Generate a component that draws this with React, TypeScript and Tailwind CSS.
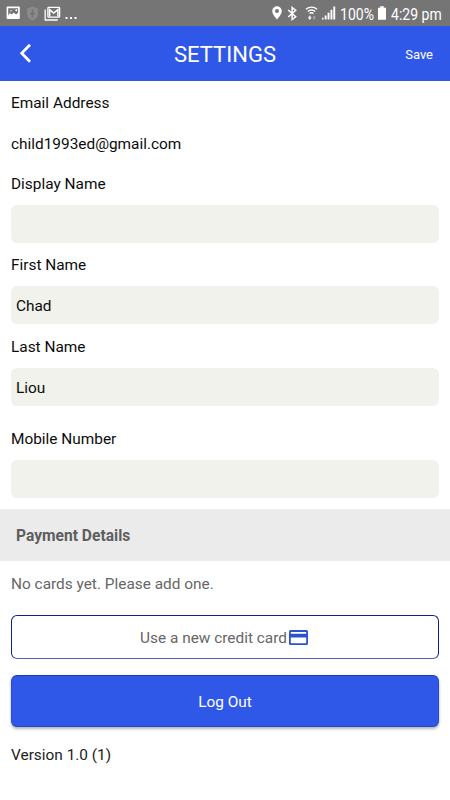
import React from "react";

function StatusBar() {
  return (
    <div className="flex h-[26px] items-center bg-[#757575] text-white">
      <svg className="ml-[6px] h-[14px] w-[14px] shrink-0" viewBox="0 0 14 14" fill="none">
        <path fillRule="evenodd" fill="#fff" d="M1.400.6h11.600a.8.8 0 0 1 .8.8v10.800a.8.8 0 0 1-.8.8H1.400a.8.8 0 0 1-.8-.8V1.400a.8.8 0 0 1 .8-.8ZM2.200 2.200v7.300l1.600-2.600 1.600 1.600 2.300-1.700 2.400 1.600 2-1.600V2.200Z" />
        <circle cx="5" cy="4.700" r=".7" fill="#fff" />
        <circle cx="10.300" cy="4.200" r="1" fill="#fff" />
      </svg>
      <svg className="ml-[6px] h-[15px] w-[13px] shrink-0" viewBox="0 0 13 15">
        <path d="M6.500.5 12 2.500v4.700c0 3.300-2.300 6-5.500 7.300C3.300 13.200 1 10.500 1 7.200V2.500Z" fill="#8a8a8a" />
        <path d="M6.500 3.500v5M6.500 10v1.600M4.500 7l2 2 2-2" stroke="#727272" strokeWidth="1.500" fill="none" />
      </svg>
      <svg className="ml-[5px] h-[15px] w-[17px] shrink-0" viewBox="0 0 17 15" fill="none" stroke="#fff">
        <path d="M1.200 3.500v10.500h12.600" strokeWidth="1.300" />
        <rect x="3.900" y="1.300" width="11.700" height="9.900" rx=".7" strokeWidth="1.300" />
        <path d="M5.600 10.500V3.600l4.150 3.500 4.150-3.500v6.900" strokeWidth="1.500" />
      </svg>
      <svg className="ml-[4px] h-[14px] w-[12px] shrink-0" viewBox="0 0 12 14" fill="#fff">
        <rect x="0.500" y="11" width="2" height="2" />
        <rect x="5" y="11" width="2" height="2" />
        <rect x="9.500" y="11" width="2" height="2" />
      </svg>

      <svg className="ml-[195px] h-[14px] w-[10px] shrink-0" viewBox="0 0 10 14">
        <path fillRule="evenodd" fill="#fff" d="M5 .3A4.800 4.800 0 0 0 .2 5.100C.2 8.700 5 13.600 5 13.600s4.800-4.900 4.800-8.500A4.800 4.800 0 0 0 5 .3Zm0 2.800a2 2 0 1 1 0 4 2 2 0 0 1 0-4Z" />
      </svg>
      <svg className="ml-[5px] h-[15px] w-[10px] shrink-0" viewBox="0 0 10 15" fill="none" stroke="#fff" strokeWidth="1.500">
        <path d="M1.200 4 8.700 10.800 5.100 13.500v-12L8.700 4.200 1.200 11" />
      </svg>
      <svg className="ml-[8px] h-[16px] w-[13px] shrink-0" viewBox="0 0 13 16" fill="none" stroke="#fff">
        <path d="M1 4.300a7.900 7.900 0 0 1 11 0M2.800 6.500a5.300 5.300 0 0 1 7.400 0M4.500 8.600a2.800 2.800 0 0 1 4 0" strokeWidth="1.300" />
        <path d="M3.900 10.700h1.700v1.900h1.300l-2.150 2.300-2.150-2.300h1.300Z" fill="#eee" stroke="none" />
        <path d="M8.400 14.500v-2H7.400l1.800-2.100 1.800 2.100h-1v2Z" fill="#a5a5a5" stroke="none" />
      </svg>
      <svg className="ml-[4px] h-[14px] w-[14px] shrink-0" viewBox="0 0 14 14" fill="#fff">
        <rect x="0" y="11.700" width="1.500" height="1.800" />
        <rect x="2.700" y="9.500" width="1.900" height="4" />
        <rect x="5.600" y="6.700" width="1.900" height="6.800" />
        <rect x="8.500" y="3.800" width="1.900" height="9.700" />
        <rect x="11.300" y="0.500" width="1.900" height="13" />
      </svg>
      <span className="ml-[4px] w-[35px] origin-left scale-x-[0.850] whitespace-nowrap pt-[3px] text-[16.500px] leading-[26px]">100%</span>
      <svg className="ml-[3px] h-[14px] w-[8px] shrink-0" viewBox="0 0 8 14" fill="#fff">
        <path d="M2.200.3h3.600v1.500H8v12H0v-12h2.200Z" />
      </svg>
      <span className="ml-[5px] origin-left scale-x-[0.850] whitespace-nowrap pt-[3px] text-[16.500px] leading-[26px]">4:29 pm</span>
    </div>
  );
}

function Header() {
  return (
    <header className="grid h-[55px] grid-cols-[1fr_auto_1fr] items-center bg-[#3058e8] pr-[17px] pl-[19px] text-white">
      <svg className="h-[20px] w-[13px]" viewBox="0 0 13 20" fill="none" stroke="#fff" strokeWidth="2.700">
        <path d="m11 .7-8.300 8.500L11 17.700" />
      </svg>
      <h1 className="-ml-0.5 pt-[3px] text-[22px] leading-[26px]">SETTINGS</h1>
      <button className="justify-self-end pt-[3px] text-[13px]">Save</button>
    </header>
  );
}

function Field({ label, value, className = "" }: { label: string; value: string; className?: string }) {
  return (
    <label className={`block ${className}`}>
      <span className="block h-5 leading-5">{label}</span>
      <input className="mt-[11px] block h-[38px] w-full rounded-md bg-[#f1f2eb] px-[5px] pt-[2px] outline-none" defaultValue={value} />
    </label>
  );
}

export default function App() {
  return (
    <div className="h-[800px] w-[450px] overflow-hidden bg-white font-['Roboto',sans-serif] text-[15.400px] text-[#0c0c0c]">
      <StatusBar />
      <Header />
      <main>
        <section className="h-[428px] px-[11px] pt-3">
          <p className="h-5 leading-5">Email Address</p>
          <p className="mt-[21px] h-5 leading-5">child1993ed@gmail.com</p>
          <Field className="mt-5" label="Display Name" value="" />
          <Field className="mt-[12.400px]" label="First Name" value="Chad" />
          <Field className="mt-[12.600px]" label="Last Name" value="Liou" />
          <Field className="mt-[23px]" label="Mobile Number" value="" />
        </section>
        <h2 className="flex h-[52px] items-center bg-[#ebebeb] px-4 pt-[3px] text-[15.600px] font-bold text-[#5e5e5e]">Payment Details</h2>
        <section className="px-[11px] pt-[13px]">
          <p className="h-5 leading-5 text-[#666]">No cards yet. Please add one.</p>
          <button className="mt-[21px] flex h-[44px] w-full items-center justify-center rounded-md border border-[#0c2383] border-b-[#4c62ad] pr-[2px] text-[#666]">
            <span className="pt-[3px]">Use a new credit card</span>
            <svg className="ml-[2px] h-[15px] w-[19px]" viewBox="0 0 19 15">
              <path fill="#2d52d0" fillRule="evenodd" d="M1.500 0h16A1.500 1.500 0 0 1 19 1.500v12a1.500 1.500 0 0 1-1.500 1.500h-16A1.500 1.500 0 0 1 0 13.500v-12A1.500 1.500 0 0 1 1.500 0Zm.3 2v1.700h15.400V2Zm0 5.500v5.700h15.400V7.500Z" />
            </svg>
          </button>
          <button className="mt-4 block h-[52px] w-full rounded-md border border-t-[#173bae] border-x-[#284bd5] border-b-[#2348cf] bg-[#3058e8] pt-[3px] text-white shadow-[0_2px_3px_rgba(0,0,0,0.3)]">
            Log Out
          </button>
          <p className="mt-[18px] h-5 leading-5 text-[#222]">Version 1.0 (1)</p>
        </section>
      </main>
    </div>
  );
}
